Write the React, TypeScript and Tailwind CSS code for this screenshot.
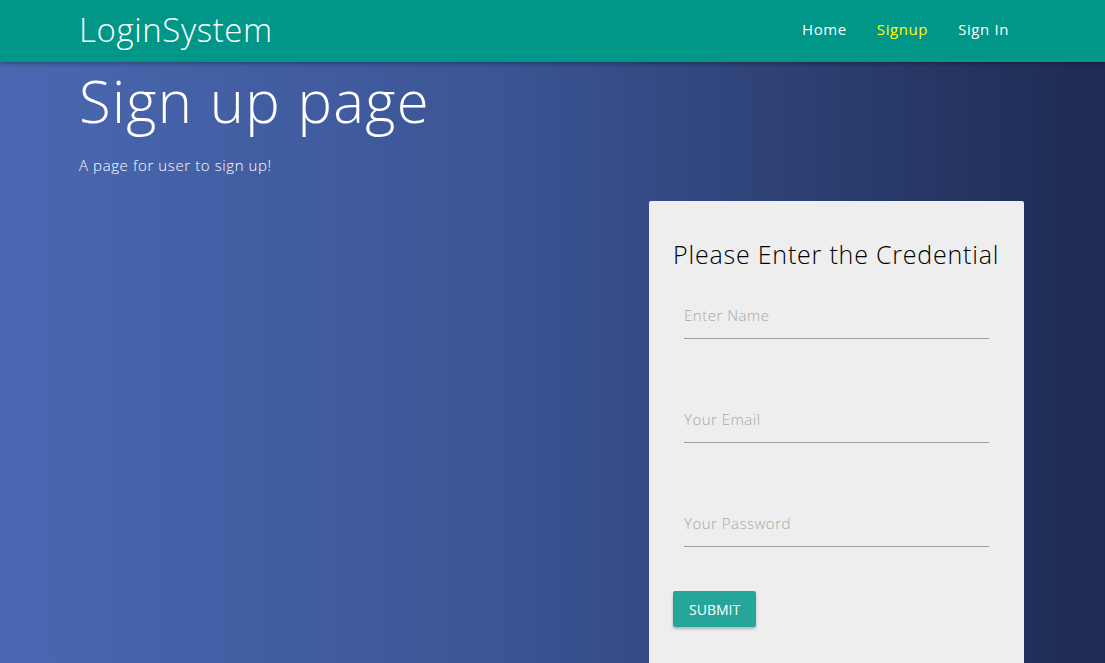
import React from "react";

const font = { fontFamily: '"Open Sans", "Noto Sans", sans-serif' };

function Field({ placeholder, type = "text" }: { placeholder: string; type?: string }) {
  return (
    <div className="mx-[11px] mb-[56px]">
      <input
        type={type}
        placeholder={placeholder}
        className="h-[48px] w-full border-0 border-b border-[#9e9e9e] bg-transparent text-[15px] font-light tracking-[0.5px] text-[#333] outline-none placeholder:text-[#a8a8a8]"
      />
    </div>
  );
}

export default function App() {
  return (
    <div
      className="flex h-[663px] flex-col overflow-hidden bg-[linear-gradient(to_right,#4a68b2,#3b5595_45%,#1e2b52)]"
      style={font}
    >
      {/* navbar */}
      <nav className="z-10 flex h-[62px] shrink-0 items-center justify-between bg-[#009688] pb-[3px] pl-[79px] pr-[96px] shadow-[0_2px_4px_rgba(0,0,0,0.3)]">
        <a className="text-[33px] font-light tracking-[0.6px] text-white">LoginSystem</a>
        <ul className="flex items-center gap-[30px] text-[15px] tracking-[0.6px] text-white">
          <li>Home</li>
          <li className="text-[#ffff00]">Signup</li>
          <li>Sign In</li>
        </ul>
      </nav>

      {/* body */}
      <div className="flex flex-1 flex-col pl-[79px] pr-[81px]">
        <h2 className="mt-[6px] text-[58px] font-light leading-[66px] tracking-[1.3px] text-white">Sign up page</h2>
        <p className="mt-[20px] text-[15px] font-light tracking-[0.6px] text-white">A page for user to sign up!</p>

        <div className="mt-[24px] flex flex-1 justify-end">
          <div className="w-[375px] rounded-t-[2px] bg-[#eeeeee] px-[24px] pt-[35px]">
            <h4 className="mb-[18px] text-[25px] font-light tracking-[0.8px] text-black">Please Enter the Credential</h4>
            <form onSubmit={(e) => e.preventDefault()}>
              <Field placeholder="Enter Name" />
              <Field placeholder="Your Email" type="email" />
              <Field placeholder="Your Password" type="password" />
              <button
                type="submit"
                className="-mt-[12px] block h-[36px] rounded-[2px] bg-[#26a69a] px-[16px] text-[14px] uppercase text-white shadow-[0_2px_3px_rgba(0,0,0,0.25)]"
              >
                Submit
              </button>
            </form>
          </div>
        </div>
      </div>
    </div>
  );
}
